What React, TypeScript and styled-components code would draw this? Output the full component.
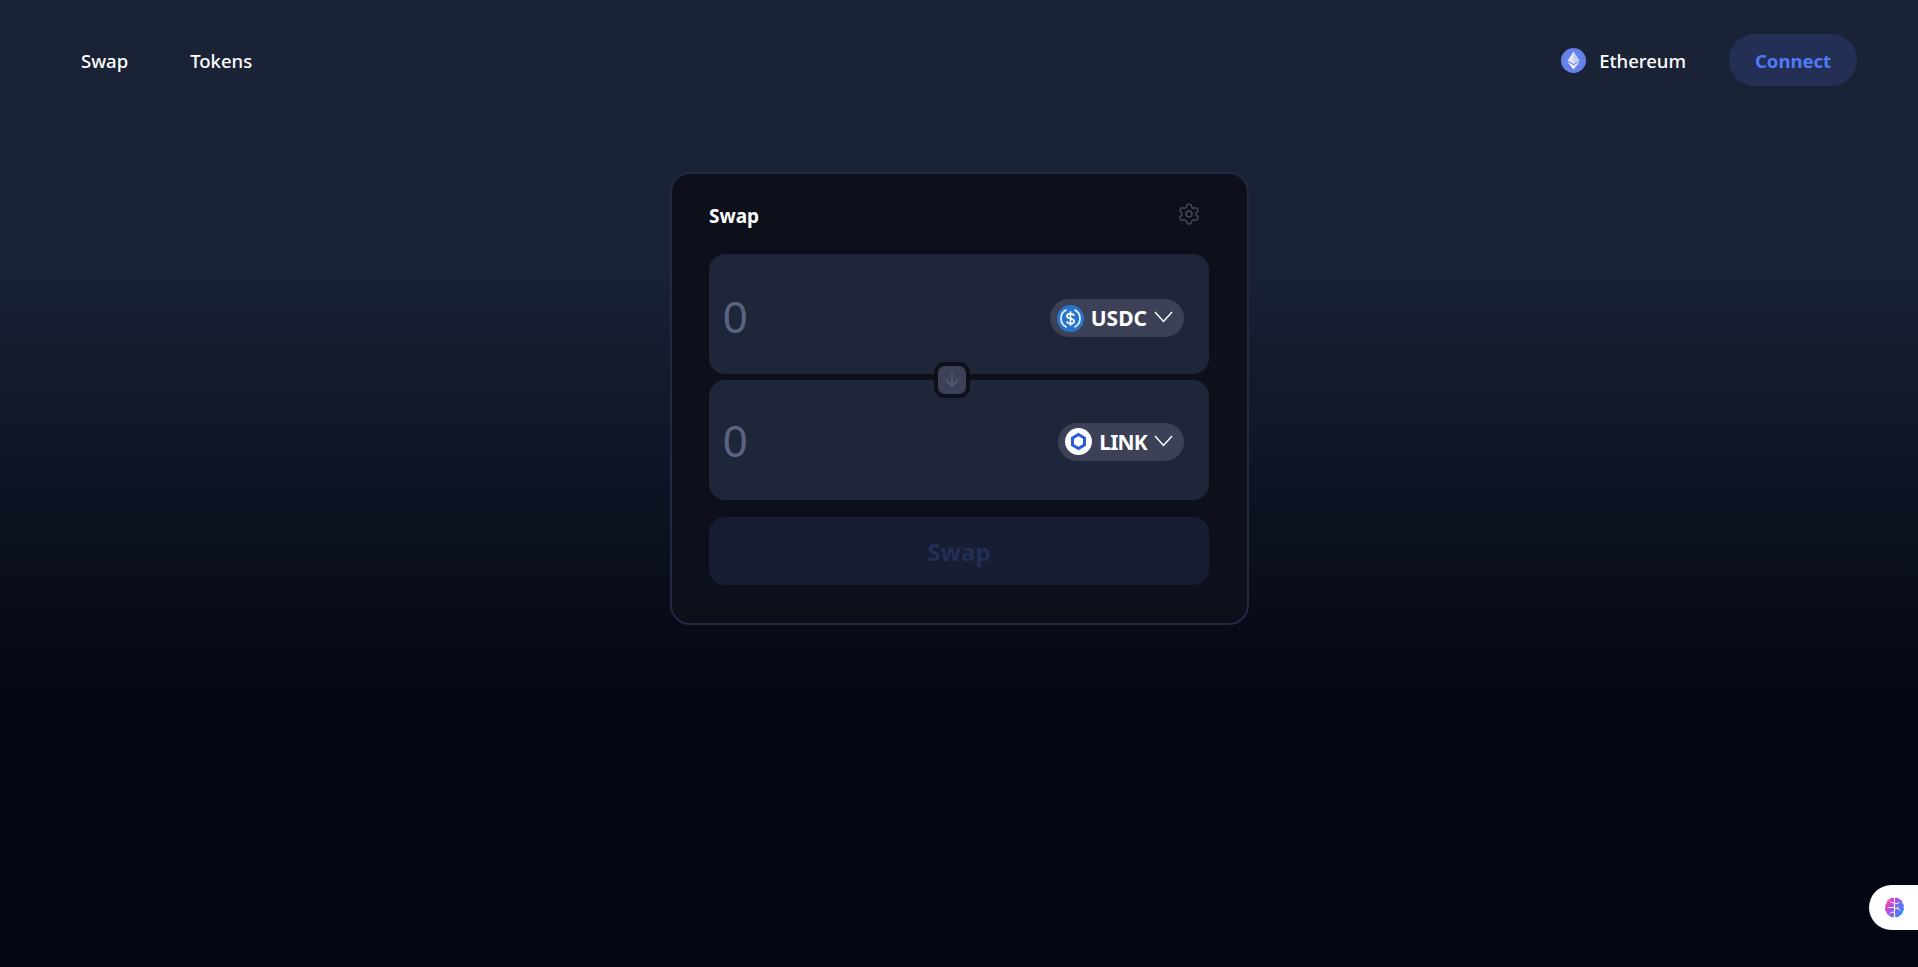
import React, { FC } from "react";
import styled, { createGlobalStyle } from "styled-components";
import { ArrowDown, Settings } from "lucide-react";

const GlobalStyle = createGlobalStyle`
  html, body {
    margin: 0;
    padding: 0;
    background: #040713;
  }
  body {
    font-family: "Noto Sans", "Open Sans", sans-serif;
    color: #fff;
  }
`;

const Page = styled.div`
  min-height: 967px;
  box-sizing: border-box;
  background: linear-gradient(180deg, #1a2236 0%, #1a2236 26%, #040713 72%, #040713 100%);
`;

const Header = styled.header`
  display: flex;
  align-items: center;
  justify-content: space-between;
  height: 52px;
  padding: 34px 61px 0 81px;
`;

const Nav = styled.nav`
  display: flex;
  gap: 62px;
`;

const NavLink = styled.a`
  margin-top: 1px;
  font-size: 18.5px;
  font-weight: 500;
  color: #fff;
`;

const HeaderRight = styled.div`
  display: flex;
  align-items: center;
  gap: 43px;
`;

const Network = styled.div`
  display: flex;
  align-items: center;
  gap: 13px;
  font-size: 18.5px;
  font-weight: 500;
`;

const ConnectButton = styled.button`
  width: 128px;
  height: 52px;
  border: 0;
  border-radius: 26px;
  background: #242f55;
  color: #4f7bf7;
  font-family: inherit;
  font-size: 18.5px;
  font-weight: 700;
`;

const Main = styled.main`
  display: flex;
  justify-content: center;
  padding-top: 86px;
`;

const Card = styled.section`
  width: 579px;
  height: 453px;
  box-sizing: border-box;
  padding: 0 37.5px;
  border: 2px solid #222940;
  border-radius: 20px;
  background: #0d101b;
`;

const CardHeader = styled.div`
  display: flex;
  align-items: center;
  justify-content: space-between;
  height: 80px;
  padding-right: 8px;
`;

const CardTitle = styled.h2`
  margin: 4px 0 0;
  font-size: 19px;
  font-weight: 700;
`;

const GearIcon = styled(Settings)`
  color: #444859;
`;

const Panels = styled.div`
  position: relative;
  display: flex;
  flex-direction: column;
  gap: 6px;
`;

const Panel = styled.div<{ $shift: number }>`
  display: flex;
  align-items: center;
  justify-content: space-between;
  height: 120px;
  padding: ${(props) => props.$shift}px 25px 0 14px;
  box-sizing: border-box;
  border-radius: 16px;
  background: #202639;
`;

const Amount = styled.span`
  font-family: "Liberation Sans", Arial, sans-serif;
  font-size: 44px;
  color: #5a6482;
`;

const TokenPill = styled.div<{ $tracking: number }>`
  display: flex;
  align-items: center;
  height: 38px;
  padding: 0 11px 0 7px;
  border-radius: 19px;
  background: #3c4157;
  font-size: 21px;
  font-weight: 700;
  letter-spacing: ${(props) => props.$tracking}px;
`;

const TokenIcon = styled.svg`
  display: block;
  width: 27px;
  height: 27px;
  margin-right: 7px;
`;

const Chevron = styled.svg`
  display: block;
  width: 19px;
  height: 12px;
  margin-left: 7px;
  margin-top: -2px;
`;

const SwitchButton = styled.div`
  position: absolute;
  left: 225px;
  top: 108px;
  display: flex;
  align-items: center;
  justify-content: center;
  width: 28px;
  height: 28px;
  border: 4px solid #0d101b;
  border-radius: 11px;
  background: #3c4157;
  color: #5a6482;
`;

const SwapButton = styled.button`
  display: block;
  width: 100%;
  height: 68px;
  margin-top: 17px;
  padding-top: 2px;
  border: 0;
  border-radius: 16px;
  background: #171d33;
  color: #242f55;
  font-family: inherit;
  font-size: 24px;
  font-weight: 700;
`;

const BrainTab = styled.div`
  position: fixed;
  right: 0;
  top: 885px;
  display: flex;
  align-items: center;
  width: 49px;
  height: 45px;
  box-sizing: border-box;
  padding-left: 14px;
  border-radius: 23px 0 0 23px;
  background: #fff;
`;

const EthLogo: FC = () => (
  <svg width="25" height="25" viewBox="0 0 25 25">
    <circle cx="12.5" cy="12.5" r="12.5" fill="#6582ea" />
    <path d="M12.5 3.5 6.5 12.8l6 3.2 6-3.2z" fill="#dfe5fb" />
    <path d="M12.5 3.5v12.5l6-3.2z" fill="#c2cdf6" />
    <path d="M6.5 14l6 7.5 6-7.5-6 3.2z" fill="#fff" />
    <path d="M12.5 17.2v4.3l6-7.5z" fill="#d3dbf9" />
  </svg>
);

const UsdcLogo: FC = () => (
  <TokenIcon viewBox="0 0 27 27">
    <circle cx="13.5" cy="13.5" r="13.5" fill="#2775ca" />
    <path d="M9.6 4.9a9.4 9.4 0 0 0 0 17.2M17.4 4.9a9.4 9.4 0 0 1 0 17.2" fill="none" stroke="#e3eefa" strokeWidth="1.8" />
    <path
      d="M17 10.8c-.3-1.4-1.6-2.2-3.5-2.2-2.1 0-3.5 1-3.5 2.6 0 1.7 1.4 2.1 3.5 2.4 2.2.3 3.6.8 3.6 2.6 0 1.6-1.5 2.6-3.6 2.6-2 0-3.3-.9-3.7-2.4M13.5 6.2v14.6"
      fill="none"
      stroke="#fff"
      strokeWidth="1.6"
    />
  </TokenIcon>
);

const LinkLogo: FC = () => (
  <TokenIcon viewBox="0 0 27 27">
    <circle cx="13.5" cy="13.5" r="13.5" fill="#fff" />
    <path d="M13.5 6.5l6 3.5v7l-6 3.5-6-3.5v-7z" fill="none" stroke="#2a5ada" strokeWidth="3" />
  </TokenIcon>
);

const BrainLogo: FC = () => (
  <svg width="23" height="23" viewBox="0 0 24 24">
    <defs>
      <linearGradient id="brainFill" x1="0" y1="0" x2="1" y2="0.6">
        <stop offset="0" stopColor="#f9953a" />
        <stop offset="0.3" stopColor="#dc3fd0" />
        <stop offset="0.6" stopColor="#8b5cf6" />
        <stop offset="1" stopColor="#2f8cf6" />
      </linearGradient>
    </defs>
    <path
      d="M11.4 2.2C9.6 1.4 7.4 2 6.6 3.7 4.8 3.9 3.6 5.4 3.9 7.2 2.3 8.2 1.8 10.2 2.7 11.8 1.6 13.4 2 15.5 3.6 16.5c-.2 1.9 1 3.4 2.9 3.7.9 1.9 3.2 2.5 4.9 1.4zM12.6 2.2c1.8-.8 4-.2 4.8 1.5 1.8.2 3 1.7 2.7 3.5 1.6 1 2.1 3 1.2 4.6 1.1 1.6.7 3.7-.9 4.7.2 1.9-1 3.4-2.9 3.7-.9 1.9-3.2 2.5-4.9 1.4z"
      fill="url(#brainFill)"
    />
    <path
      d="M11.4 7H8.5L7 5.5M11.4 12H5M11.4 17H8.5L7 18.5M12.6 8h3l1.5-2M12.6 13h3l2.5 2M15.5 13v-2"
      fill="none"
      stroke="#fff"
      strokeWidth="1"
    />
  </svg>
);

type TokenRowProps = {
  symbol: string;
  logo: React.ReactNode;
  shift: number;
  tracking: number;
};

const TokenRow: FC<TokenRowProps> = ({ symbol, logo, shift, tracking }) => (
  <Panel $shift={shift}>
    <Amount>0</Amount>
    <TokenPill $tracking={tracking}>
      {logo}
      {symbol}
      <Chevron viewBox="0 0 19 12">
        <path d="M1 1l8.5 9.5L18 1" fill="none" stroke="#fff" strokeWidth="1.5" />
      </Chevron>
    </TokenPill>
  </Panel>
);

export default function App() {
  return (
    <>
      <GlobalStyle />
      <Page>
        <Header>
          <Nav>
            <NavLink>Swap</NavLink>
            <NavLink>Tokens</NavLink>
          </Nav>
          <HeaderRight>
            <Network>
              <EthLogo />
              Ethereum
            </Network>
            <ConnectButton>Connect</ConnectButton>
          </HeaderRight>
        </Header>
        <Main>
          <Card>
            <CardHeader>
              <CardTitle>Swap</CardTitle>
              <GearIcon size={24} strokeWidth={1.5} />
            </CardHeader>
            <Panels>
              <TokenRow symbol="USDC" logo={<UsdcLogo />} shift={8} tracking={0} />
              <TokenRow symbol="LINK" logo={<LinkLogo />} shift={3} tracking={-0.8} />
              <SwitchButton>
                <ArrowDown size={20} strokeWidth={1.5} />
              </SwitchButton>
            </Panels>
            <SwapButton>Swap</SwapButton>
          </Card>
        </Main>
        <BrainTab>
          <BrainLogo />
        </BrainTab>
      </Page>
    </>
  );
}
